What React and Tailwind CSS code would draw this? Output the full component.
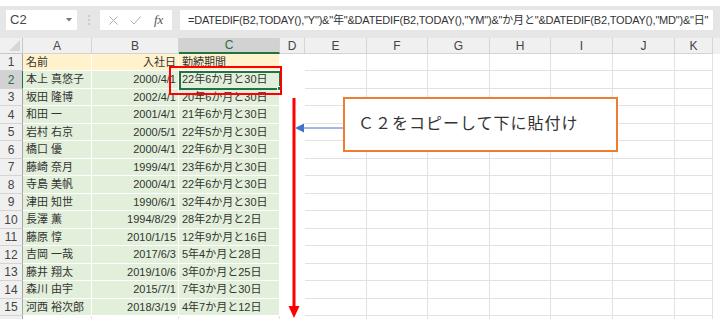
import React from "react";

const names = ["本上 真悠子","坂田 隆博","和田 一","岩村 右京","橋口 優","藤崎 奈月","寺島 美帆","津田 知世","長澤 薫","藤原 惇","吉岡 一哉","藤井 翔太","森川 由宇","河西 裕次郎"];
const dates = ["2000/4/1","2002/4/1","2001/4/1","2000/5/1","2000/4/1","1999/4/1","2000/4/1","1990/6/1","1994/8/29","2010/1/15","2017/6/3","2019/10/6","2015/7/1","2018/3/19"];
const periods = ["22年6か月と30日","20年6か月と30日","21年6か月と30日","22年5か月と30日","22年6か月と30日","23年6か月と30日","22年6か月と30日","32年4か月と30日","28年2か月と2日","12年9か月と16日","5年4か月と28日","3年0か月と25日","7年3か月と30日","4年7か月と12日"];

const rightCols = ["w-[62px]","w-[61px]","w-[62px]","w-[61px]","w-[62px]","w-[62px]","w-[38px]"];
const rightLetters = ["E","F","G","H","I","J","K"];

const cellFont = { fontFamily: '"Liberation Sans", "Noto Sans CJK JP", sans-serif' };

function EmptyRight() {
  return (
    <>
      <div className="w-[25px] h-full bg-white" />
      {rightCols.map((w, i) => (
        <div key={i} className={`${w} h-full border-r border-b border-[#e2e2e2] bg-white`} />
      ))}
    </>
  );
}

function Row({ n, a, b, c, header, h }) {
  const bg = header ? "bg-[#fff2cc]" : "bg-[#e2efda]";
  const sel = n === 2;
  return (
    <div className={`flex ${h}`}>
      <div className={`w-[23px] h-full flex items-center justify-center text-[12px] border-b border-[#d4d4d4] border-r ${sel ? "bg-[#d2d2d2] text-[#217346] border-r-[#217346]" : "bg-[#f0f0f0] text-[#444] border-r-[#a8a8a8]"}`}>{n}</div>
      <div className={`w-[69px] h-full ${bg} border-r border-b border-white flex items-center pl-[3px] text-[11px] text-[#333] whitespace-nowrap overflow-hidden`}>{a}</div>
      <div className={`w-[87px] h-full ${bg} border-r border-b border-white flex items-center justify-end pr-[2px] text-[11px] text-[#333] whitespace-nowrap`}>{b}</div>
      <div className={`w-[101px] h-full ${bg} border-r border-b border-white flex items-center pl-[3px] text-[11px] text-[#333] whitespace-nowrap`}>{c}</div>
      <EmptyRight />
    </div>
  );
}

export default function App() {
  const heights = ["h-[17px]","h-[18px]","h-[17px]","h-[18px]","h-[17px]","h-[18px]","h-[17px]","h-[18px]","h-[17px]","h-[18px]","h-[17px]","h-[18px]","h-[17px]","h-[18px]","h-[17px]"];
  return (
    <div className="relative w-[720px] h-[329px] bg-white overflow-hidden" style={cellFont}>
      <div className="h-[6px] bg-white" />
      {/* formula bar */}
      <div className="h-[32px] bg-[#e6e6e6] flex items-start pt-[4px]">
        <div className="ml-[6px] w-[71px] h-[20px] bg-white flex items-center justify-between pl-[4px] pr-[5px]">
          <span className="text-[13px] text-[#444]">C2</span>
          <svg width="6" height="4" viewBox="0 0 6 4"><path d="M0 0 L6 0 L3 3.5 Z" fill="#777" /></svg>
        </div>
        <div className="w-[23px] h-[20px] flex items-center justify-center">
          <svg width="2" height="10" viewBox="0 0 2 10">
            <circle cx="1" cy="1" r="0.8" fill="#aaa" />
            <circle cx="1" cy="5" r="0.8" fill="#aaa" />
            <circle cx="1" cy="9" r="0.8" fill="#aaa" />
          </svg>
        </div>
        <div className="w-[72px] h-[20px] bg-white flex items-center">
          <svg className="ml-[9px]" width="9" height="9" viewBox="0 0 9 9"><path d="M0.5 0.5 L8.5 8.5 M8.5 0.5 L0.5 8.5" stroke="#b0b0b0" strokeWidth="1" /></svg>
          <svg className="ml-[12px]" width="11" height="9" viewBox="0 0 11 9"><path d="M0.5 4.5 L4 8 L10.5 0.5" stroke="#b0b0b0" strokeWidth="1" fill="none" /></svg>
          <span className="ml-[13px] text-[13px] italic text-[#555]" style={{ fontFamily: '"Liberation Serif", serif' }}>fx</span>
        </div>
        <div className="ml-[8px] w-[533px] h-[20px] bg-white flex items-center pl-[8px] text-[11px] tracking-[-0.2px] text-[#333] whitespace-nowrap overflow-hidden">
          =DATEDIF(B2,TODAY(),"Y")&amp;"年"&amp;DATEDIF(B2,TODAY(),"YM")&amp;"か月と"&amp;DATEDIF(B2,TODAY(),"MD")&amp;"日"
        </div>
      </div>
      {/* column headers */}
      <div className="flex h-[16px] bg-[#f0f0f0] text-[12px] text-[#444]">
        <div className="w-[23px] h-full border-r border-b border-[#c8c8c8] relative">
          <svg className="absolute right-[2px] bottom-[2px]" width="11" height="11" viewBox="0 0 11 11"><path d="M11 0 L11 11 L0 11 Z" fill="#d6d6d6" /></svg>
        </div>
        <div className="w-[69px] h-full border-r border-b border-[#d4d4d4] flex items-center justify-center">A</div>
        <div className="w-[87px] h-full border-r border-b border-[#d4d4d4] flex items-center justify-center">B</div>
        <div className="w-[101px] h-full border-r border-[#d4d4d4] border-b-2 border-b-[#217346] bg-[#d2d2d2] text-[#217346] flex items-center justify-center">C</div>
        <div className="w-[25px] h-full border-r border-b border-[#d4d4d4] flex items-center justify-center">D</div>
        {rightCols.map((w, i) => (
          <div key={i} className={`${w} h-full border-r border-b border-[#d4d4d4] flex items-center justify-center`}>{rightLetters[i]}</div>
        ))}
      </div>
      <Row n={1} a="名前" b="入社日" c="勤続期間" header h={heights[0]} />
      {names.map((nm, i) => (
        <Row key={i} n={i + 2} a={nm} b={dates[i]} c={periods[i]} h={heights[i + 1]} />
      ))}
      <div className="flex h-[3px]">
        <div className="w-[23px] h-full bg-[#f0f0f0] border-r border-[#a8a8a8]" />
        <div className="w-[69px] h-full border-r border-[#e2e2e2]" />
        <div className="w-[87px] h-full border-r border-[#e2e2e2]" />
        <div className="w-[101px] h-full border-r border-[#e2e2e2]" />
        <div className="w-[25px] h-full" />
        {rightCols.map((w, i) => (
          <div key={i} className={`${w} h-full border-r border-[#e2e2e2]`} />
        ))}
      </div>

      {/* selected cell C2 */}
      <div className="absolute left-[179px] top-[71px] w-[102px] h-[19px] border-2 border-[#217346]" />
      <div className="absolute left-[277px] top-[86px] w-[5px] h-[5px] bg-[#217346] border border-white" />
      {/* red rectangle */}
      <div className="absolute left-[169px] top-[66px] w-[113px] h-[29px] border-2 border-[#ff0000]" />
      {/* red down arrow */}
      <svg className="absolute left-[287px] top-[96px]" width="14" height="225" viewBox="0 0 14 225">
        <rect x="5.5" y="2" width="3" height="210" fill="#ff0000" />
        <path d="M1.5 210 L12.5 210 L7 222 Z" fill="#ff0000" />
      </svg>
      {/* blue arrow */}
      <svg className="absolute left-[294px] top-[122px]" width="52" height="12" viewBox="0 0 52 12">
        <line x1="8" y1="6" x2="50" y2="6" stroke="#4472c4" strokeWidth="1" />
        <path d="M1 6 L10 1.5 L10 10.5 Z" fill="#4472c4" />
      </svg>
      {/* callout */}
      <div className="absolute left-[343px] top-[97px] w-[275px] h-[55px] bg-white border-2 border-[#ed7d31] flex items-center pl-[13px] pb-[6px]">
        <span className="text-[16px] tracking-[1px] text-[#333]" style={{ fontFamily: '"Noto Sans CJK JP", sans-serif' }}>Ｃ２をコピーして下に貼付け</span>
      </div>
    </div>
  );
}
